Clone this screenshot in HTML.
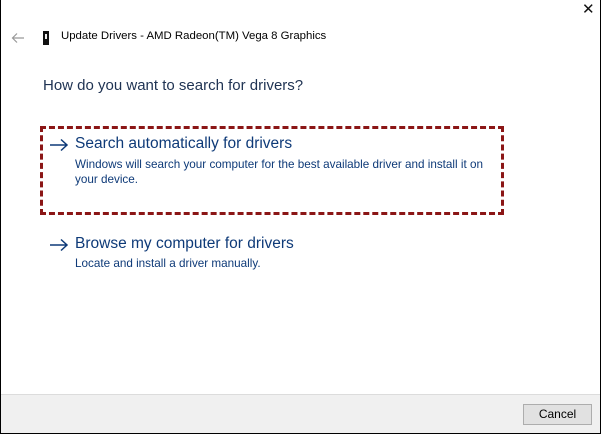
<!DOCTYPE html>
<html><head><style>
*{margin:0;padding:0;box-sizing:border-box}
body{width:602px;height:435px;background:#fff;font-family:"Liberation Sans",sans-serif;position:relative;overflow:hidden}
.frame{position:absolute;left:0;top:0;width:601px;height:434px;border:1.5px solid #000;border-top:none}
.t{position:absolute;white-space:nowrap}
</style></head><body>
<div class="frame"></div>
<div class="t" style="left:582px;top:0px;font-size:15px;color:#111">✕</div>
<svg class="t" style="left:11px;top:32px" width="14" height="12"><path d="M13 6H2M6 1.5L1.5 6L6 10.5" stroke="#999" stroke-width="1.2" fill="none"/></svg>
<div class="t" style="left:43px;top:31px;width:6px;height:14px;background:#111;border-top:2px solid #111"></div>
<div class="t" style="left:45px;top:34px;width:2px;height:5px;background:#eee"></div>
<div class="t" style="left:61px;top:30px;font-size:11.4px;color:#000">Update Drivers - AMD Radeon(TM) Vega 8 Graphics</div>
<div class="t" style="left:43px;top:77px;font-size:15px;color:#1e3252">How do you want to search for drivers?</div>
<div class="t" style="left:40px;top:126px;width:464px;height:89px;border:3px dashed #8b1616"></div>
<svg class="t" style="left:49px;top:138px" width="20" height="14"><path d="M1 7H18M12 1.5L18 7L12 12.5" stroke="#0e3a78" stroke-width="1.5" fill="none"/></svg>
<div class="t" style="left:75px;top:135px;font-size:15.5px;color:#0e3a78">Search automatically for drivers</div>
<div class="t" style="left:75px;top:157px;font-size:11.7px;color:#0e3a78;line-height:15px">Windows will search your computer for the best available driver and install it on<br>your device.</div>
<svg class="t" style="left:49px;top:238px" width="20" height="14"><path d="M1 7H18M12 1.5L18 7L12 12.5" stroke="#0e3a78" stroke-width="1.5" fill="none"/></svg>
<div class="t" style="left:75px;top:235px;font-size:15.5px;color:#0e3a78">Browse my computer for drivers</div>
<div class="t" style="left:75px;top:257px;font-size:11.7px;color:#0e3a78">Locate and install a driver manually.</div>
<div class="t" style="left:1px;top:394px;width:599px;height:39px;background:#f0f0f0;border-top:1px solid #dcdcdc"></div>
<div class="t" style="left:523px;top:404px;width:69px;height:21px;border:1px solid #adadad;background:#e1e1e1;font-size:12px;text-align:center;line-height:19px;color:#000">Cancel</div>
</body></html>
